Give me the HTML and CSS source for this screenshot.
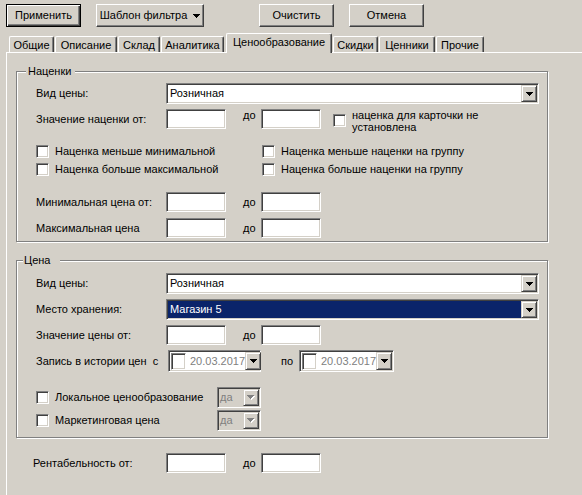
FILE: index.html
```html
<!DOCTYPE html>
<html lang="ru">
<head>
<meta charset="utf-8">
<title>Фильтр</title>
<link rel="stylesheet" href="styles.css">
</head>
<body>
<div class="toolbar">
  <button class="btn btn-default w75 mr15">Применить</button>
  <button class="btn w108 mr55">Шаблон фильтра <svg class="arr arr-btn" width="7" height="4" viewBox="0 0 7 4"><path d="M0 0h7v1H0zM1 1h5v1H1zM2 2h3v1H2zM3 3h1v1H3z"/></svg></button>
  <button class="btn w75 mr15">Очистить</button>
  <button class="btn w75">Отмена</button>
</div>

<div class="tabs">
  <div class="tab t1">Общие</div>
  <div class="tab t2">Описание</div>
  <div class="tab t3">Склад</div>
  <div class="tab t4">Аналитика</div>
  <div class="tab sel">Ценообразование</div>
  <div class="tab t6">Скидки</div>
  <div class="tab t7">Ценники</div>
  <div class="tab t8">Прочие</div>
</div>

<div class="panel">
  <div class="group g1">
    <span class="legend lg1">Наценки</span>

    <div class="row h21">
      <span class="lbl">Вид цены:</span>
      <div class="combo cw-wide">
        <span class="ctext">Розничная</span>
        <span class="cbtn"><svg class="arr" width="7" height="4" viewBox="0 0 7 4"><path d="M0 0h7v1H0zM1 1h5v1H1zM2 2h3v1H2zM3 3h1v1H3z"/></svg></span>
      </div>
    </div>

    <div class="row h20 mt5 top">
      <span class="lbl lbl-mid">Значение наценки от:</span>
      <span class="field"></span>
      <span class="do">до</span>
      <span class="field"></span>
      <span class="cb cb-note"></span>
      <span class="note">наценка для карточки не<br>установлена</span>
    </div>

    <div class="row h13 mt16">
      <label class="chk c1"><span class="cb"></span>Наценка меньше минимальной</label>
      <label class="chk"><span class="cb"></span>Наценка меньше наценки на группу</label>
    </div>
    <div class="row h13 mt5">
      <label class="chk c1"><span class="cb"></span>Наценка больше максимальной</label>
      <label class="chk"><span class="cb"></span>Наценка больше наценки на группу</label>
    </div>

    <div class="row h20 mt16">
      <span class="lbl">Минимальная цена от:</span>
      <span class="field"></span>
      <span class="do">до</span>
      <span class="field"></span>
    </div>
    <div class="row h20 mt6">
      <span class="lbl">Максимальная цена</span>
      <span class="field"></span>
      <span class="do">до</span>
      <span class="field"></span>
    </div>
  </div>

  <div class="group g2">
    <span class="legend lg2">Цена</span>

    <div class="row h21">
      <span class="lbl">Вид цены:</span>
      <div class="combo cw-wide">
        <span class="ctext">Розничная</span>
        <span class="cbtn"><svg class="arr" width="7" height="4" viewBox="0 0 7 4"><path d="M0 0h7v1H0zM1 1h5v1H1zM2 2h3v1H2zM3 3h1v1H3z"/></svg></span>
      </div>
    </div>
    <div class="row h21 mt5">
      <span class="lbl">Место хранения:</span>
      <div class="combo cw-wide">
        <span class="ctext ctext-sel">Магазин 5</span>
        <span class="cbtn"><svg class="arr" width="7" height="4" viewBox="0 0 7 4"><path d="M0 0h7v1H0zM1 1h5v1H1zM2 2h3v1H2zM3 3h1v1H3z"/></svg></span>
      </div>
    </div>
    <div class="row h20 mt5">
      <span class="lbl">Значение цены от:</span>
      <span class="field"></span>
      <span class="do">до</span>
      <span class="field"></span>
    </div>
    <div class="row h22 mt5">
      <span class="lbl lbl-date">Запись в истории цен&nbsp; с</span>
      <div class="date dw1">
        <span class="dcb"></span>
        <span class="dtext">20.03.2017</span>
        <span class="cbtn dbtn"><svg class="arr" width="7" height="4" viewBox="0 0 7 4"><path d="M0 0h7v1H0zM1 1h5v1H1zM2 2h3v1H2zM3 3h1v1H3z"/></svg></span>
      </div>
      <span class="po">по</span>
      <div class="date dw2">
        <span class="dcb"></span>
        <span class="dtext">20.03.2017</span>
        <span class="cbtn dbtn"><svg class="arr" width="7" height="4" viewBox="0 0 7 4"><path d="M0 0h7v1H0zM1 1h5v1H1zM2 2h3v1H2zM3 3h1v1H3z"/></svg></span>
      </div>
    </div>
    <div class="row h21 mt15">
      <label class="chk c-loc"><span class="cb"></span>Локальное ценообразование</label>
      <div class="combo dis cw-small">
        <span class="ctext">да</span>
        <span class="cbtn"><svg class="arr" width="8" height="5" viewBox="0 0 8 5"><path class="hl" d="M1 1h7v1H1zM2 2h5v1H2zM3 3h3v1H3zM4 4h1v1H4z"/><path class="gr" d="M0 0h7v1H0zM1 1h5v1H1zM2 2h3v1H2zM3 3h1v1H3z"/></svg></span>
      </div>
    </div>
    <div class="row h21 mt2">
      <label class="chk c-loc"><span class="cb"></span>Маркетинговая цена</label>
      <div class="combo dis cw-small">
        <span class="ctext">да</span>
        <span class="cbtn"><svg class="arr" width="8" height="5" viewBox="0 0 8 5"><path class="hl" d="M1 1h7v1H1zM2 2h5v1H2zM3 3h3v1H3zM4 4h1v1H4z"/><path class="gr" d="M0 0h7v1H0zM1 1h5v1H1zM2 2h3v1H2zM3 3h1v1H3z"/></svg></span>
      </div>
    </div>
  </div>

  <div class="row h20 rent">
    <span class="lbl lbl-rent">Рентабельность от:</span>
    <span class="field"></span>
    <span class="do">до</span>
    <span class="field"></span>
  </div>
</div>
</body>
</html>
```

FILE: styles.css
```css
* { box-sizing: border-box; }
html, body { margin: 0; padding: 0; }
body {
  width: 582px;
  height: 495px;
  overflow: hidden;
  background: #d4d0c8;
  font-family: "Liberation Sans", Arial, sans-serif;
  font-size: 11px;
  line-height: 13px;
  color: #000;
}

/* toolbar */
.toolbar { display: flex; height: 33px; padding: 4px 0 0 6px; }
.btn {
  height: 23px;
  margin: 0;
  padding: 0;
  font: inherit;
  color: #000;
  background: #d4d0c8;
  border: 1px solid;
  border-color: #fff #404040 #404040 #fff;
  box-shadow: inset -1px -1px #808080;
  display: flex;
  align-items: center;
  justify-content: center;
  gap: 5px;
}
.btn-default {
  border-color: #000;
  box-shadow: inset 1px 1px #fff, inset -1px -1px #404040, inset -2px -2px #808080;
}
.w75 { width: 75px; }
.w108 { width: 108px; }
.mr15 { margin-right: 15px; }
.mr55 { margin-right: 55px; }
.arr { display: block; fill: #000; shape-rendering: crispEdges; flex: none; }
.arr-btn { margin-left: 1px; }

/* tabs */
.tabs {
  display: flex;
  align-items: flex-end;
  height: 19px;
  padding-left: 9px;
  position: relative;
  z-index: 1;
}
.tab {
  height: 16px;
  margin-right: 1px;
  padding-top: 1px;
  border-top: 1px solid #fff;
  border-left: 1px solid #fff;
  border-right: 1px solid #404040;
  border-top-left-radius: 2px;
  border-top-right-radius: 2px;
  box-shadow: inset -1px 0 #808080;
  background: #d4d0c8;
  display: flex;
  align-items: center;
  justify-content: center;
  white-space: nowrap;
}
.t1 { width: 45px; }
.t2 { width: 62px; }
.t3 { width: 42px; }
.t4 { width: 63px; margin-right: 2px; }
.t6 { width: 45px; }
.t7 { width: 56px; }
.t8 { width: 48px; }
.tab.sel {
  width: 106px;
  height: 20px;
  margin-bottom: -1px;
  padding: 0 0 3px;
}

/* panel */
.panel {
  margin-left: 6px;
  width: 576px;
  height: 443px;
  border-top: 1px solid #fff;
  border-left: 1px solid #fff;
  padding: 18px 0 0 9px;
}

/* group boxes */
.group {
  position: relative;
  width: 532px;
  border: 1px solid #808080;
  box-shadow: inset 1px 1px #fff, 1px 1px #fff;
  padding-left: 19px;
}
.g1 { padding-top: 11px; padding-bottom: 3px; }
.g2 { margin-top: 18px; padding-top: 12px; padding-bottom: 6px; }
.legend {
  position: absolute;
  top: -7px;
  background: #d4d0c8;
  line-height: 13px;
  white-space: nowrap;
}
.lg1 { left: 9px; padding: 0 4px 0 2px; }
.lg2 { left: 6px; padding: 0 10px 0 1px; }

/* rows */
.row { display: flex; align-items: center; white-space: nowrap; }
.row.top { align-items: flex-start; }
.h13 { height: 13px; }
.h20 { height: 20px; }
.h21 { height: 21px; }
.h22 { height: 22px; }
.mt2 { margin-top: 2px; }
.mt5 { margin-top: 5px; }
.mt6 { margin-top: 6px; }
.mt15 { margin-top: 15px; }
.mt16 { margin-top: 16px; }
.lbl { width: 130px; flex: none; }
.lbl-mid { align-self: center; }
.lbl-date { width: 132px; }

/* sunken controls */
.field, .cb, .combo, .date, .dcb {
  border: 1px solid;
  border-color: #808080 #fff #fff #808080;
  box-shadow: inset 1px 1px #404040, inset -1px -1px #d4d0c8;
  background: #fff;
  flex: none;
}
.field { width: 60px; height: 20px; }
.do { width: 35px; padding-left: 17px; flex: none; }
.cb { width: 13px; height: 13px; }
.cb-note { margin: 5px 0 0 12px; }
.note { margin-left: 6px; line-height: 12px; white-space: nowrap; }

.chk { display: flex; align-items: center; gap: 6px; flex: none; }
.c1 { width: 226px; }
.c-loc { width: 181px; }

/* combo */
.combo { height: 21px; padding: 1px; display: flex; align-items: stretch; }
.cw-wide { width: 373px; }
.cw-small { width: 44px; }
.ctext { flex: 1; padding-left: 2px; display: flex; align-items: center; overflow: hidden; }
.ctext-sel { background: #0a246a; color: #fff; }
.cbtn {
  width: 16px;
  height: 17px;
  flex: none;
  background: #d4d0c8;
  border: 1px solid;
  border-color: #d4d0c8 #404040 #404040 #d4d0c8;
  box-shadow: inset 1px 1px #fff, inset -1px -1px #808080;
  display: flex;
  align-items: center;
  justify-content: center;
}
.combo.dis { background: #d4d0c8; }
.combo.dis .ctext { color: #808080; padding-left: 1px; }
.combo.dis .arr .gr { fill: #808080; }
.combo.dis .arr .hl { fill: #fff; }

/* date picker */
.date { height: 22px; padding: 1px; display: flex; align-items: center; }
.dw1 { width: 93px; }
.dw2 { width: 95px; }
.dcb { width: 15px; height: 17px; margin-left: 1px; }
.dtext { flex: 1; color: #808080; padding-left: 4px; }
.dbtn { height: 18px; }
.po { width: 38px; padding-left: 20px; flex: none; }

/* rentability */
.rent { margin-top: 15px; padding-left: 17px; }
.lbl-rent { width: 133px; }
```
